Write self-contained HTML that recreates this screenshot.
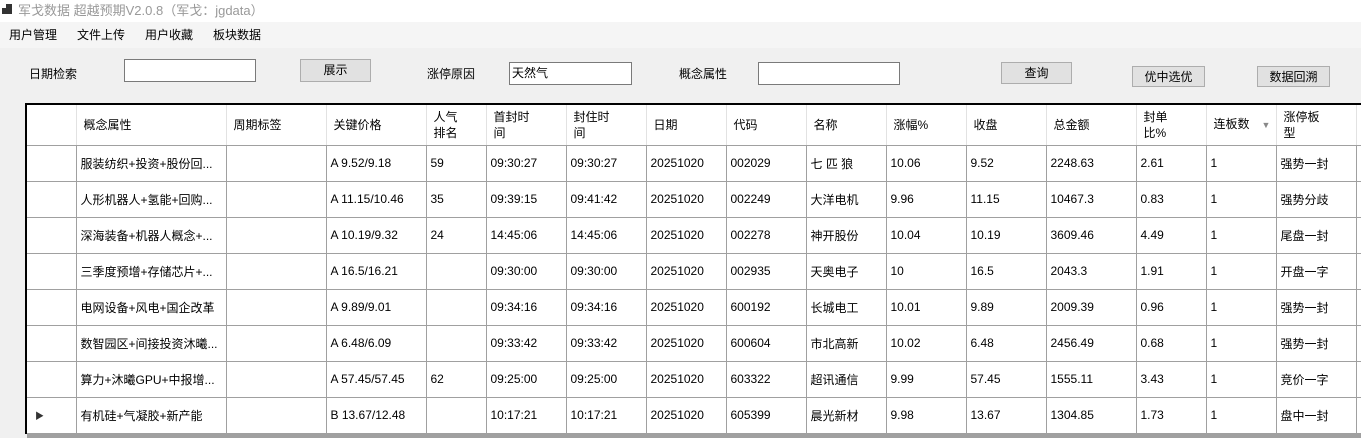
<!DOCTYPE html>
<html><head><meta charset="utf-8"><style>
*{margin:0;padding:0;box-sizing:border-box}
body{width:1361px;height:438px;overflow:hidden;background:#f0f0f0;font-family:"Liberation Sans","Noto Sans CJK SC",sans-serif;font-size:12px;color:#000;position:relative}
.abs{position:absolute}
.title{left:0;top:0;width:1361px;height:22px;background:#fff;color:#999;font-size:13px;line-height:22px;padding-left:18px}
.menu{left:0;top:22px;width:1361px;height:26px;background:#f5f5f5;font-size:12px;line-height:26px}
.menu span{position:absolute;top:0}
.lbl{font-size:12px;line-height:16px}
.tb{background:#fff;border:1px solid #7a7a7a;height:23px;font-size:12px;line-height:21px;padding-left:2px}
.btn{background:#e1e1e1;border:1px solid #adadad;text-align:center;font-size:12px;line-height:20px}
table{position:absolute;left:25px;top:103px;width:1336px;border-collapse:collapse;table-layout:fixed;background:#fff;border-top:2px solid #000;border-left:2px solid #000}
td{border:1px solid #a0a0a0;height:36px;padding:0 0 0 4px;white-space:nowrap;overflow:hidden;font-size:12px;vertical-align:middle}
tr.h td{height:41px;border-top:none;border-left:1px solid #e2e2e2;border-right:1px solid #e2e2e2;border-bottom:1px solid #a0a0a0;padding-left:7px;line-height:16px}
td.rh{border-left:none}
td.last{border-right:none}
</style></head><body>
<div class="abs title"><span class="abs" style="left:2px;top:8px;width:5px;height:6px;background:#333"></span><span class="abs" style="left:6px;top:4px;width:6px;height:10px;background:#333"></span>军戈数据 超越预期V2.0.8（军戈：jgdata）</div>
<div class="abs menu"><span style="left:9px">用户管理</span><span style="left:77px">文件上传</span><span style="left:145px">用户收藏</span><span style="left:213px">板块数据</span></div>
<div class="abs lbl" style="left:29px;top:66px">日期检索</div>
<div class="abs tb" style="left:124px;top:59px;width:132px"></div>
<div class="abs btn" style="left:300px;top:59px;width:71px;height:23px">展示</div>
<div class="abs lbl" style="left:427px;top:66px">涨停原因</div>
<div class="abs tb" style="left:509px;top:62px;width:123px">天然气</div>
<div class="abs lbl" style="left:679px;top:66px">概念属性</div>
<div class="abs tb" style="left:758px;top:62px;width:142px"></div>
<div class="abs btn" style="left:1001px;top:62px;width:71px;height:22px">查询</div>
<div class="abs btn" style="left:1132px;top:66px;width:73px;height:21px">优中选优</div>
<div class="abs btn" style="left:1257px;top:66px;width:73px;height:21px">数据回溯</div>
<table>
<colgroup><col style="width:50px"><col style="width:150px"><col style="width:100px"><col style="width:100px"><col style="width:60px"><col style="width:80px"><col style="width:80px"><col style="width:80px"><col style="width:80px"><col style="width:80px"><col style="width:80px"><col style="width:80px"><col style="width:90px"><col style="width:70px"><col style="width:70px"><col style="width:80px"><col style="width:6px"></colgroup>
<tr class="h"><td class="rh"></td><td>概念属性</td><td>周期标签</td><td>关键价格</td><td>人气<br>排名</td><td>首封时<br>间</td><td>封住时<br>间</td><td>日期</td><td>代码</td><td>名称</td><td>涨幅%</td><td>收盘</td><td>总金额</td><td>封单<br>比%</td><td>连板数<span style="position:relative;left:12px;color:#888;font-size:9px">▼</span></td><td>涨停板<br>型</td><td class="last"></td></tr>
<tr><td class="rh"></td><td>服装纺织+投资+股份回...</td><td></td><td>A 9.52/9.18</td><td>59</td><td>09:30:27</td><td>09:30:27</td><td>20251020</td><td>002029</td><td>七 匹 狼</td><td>10.06</td><td>9.52</td><td>2248.63</td><td>2.61</td><td>1</td><td>强势一封</td><td class="last"></td></tr>
<tr><td class="rh"></td><td>人形机器人+氢能+回购...</td><td></td><td>A 11.15/10.46</td><td>35</td><td>09:39:15</td><td>09:41:42</td><td>20251020</td><td>002249</td><td>大洋电机</td><td>9.96</td><td>11.15</td><td>10467.3</td><td>0.83</td><td>1</td><td>强势分歧</td><td class="last"></td></tr>
<tr><td class="rh"></td><td>深海装备+机器人概念+...</td><td></td><td>A 10.19/9.32</td><td>24</td><td>14:45:06</td><td>14:45:06</td><td>20251020</td><td>002278</td><td>神开股份</td><td>10.04</td><td>10.19</td><td>3609.46</td><td>4.49</td><td>1</td><td>尾盘一封</td><td class="last"></td></tr>
<tr><td class="rh"></td><td>三季度预增+存储芯片+...</td><td></td><td>A 16.5/16.21</td><td></td><td>09:30:00</td><td>09:30:00</td><td>20251020</td><td>002935</td><td>天奥电子</td><td>10</td><td>16.5</td><td>2043.3</td><td>1.91</td><td>1</td><td>开盘一字</td><td class="last"></td></tr>
<tr><td class="rh"></td><td>电网设备+风电+国企改革</td><td></td><td>A 9.89/9.01</td><td></td><td>09:34:16</td><td>09:34:16</td><td>20251020</td><td>600192</td><td>长城电工</td><td>10.01</td><td>9.89</td><td>2009.39</td><td>0.96</td><td>1</td><td>强势一封</td><td class="last"></td></tr>
<tr><td class="rh"></td><td>数智园区+间接投资沐曦...</td><td></td><td>A 6.48/6.09</td><td></td><td>09:33:42</td><td>09:33:42</td><td>20251020</td><td>600604</td><td>市北高新</td><td>10.02</td><td>6.48</td><td>2456.49</td><td>0.68</td><td>1</td><td>强势一封</td><td class="last"></td></tr>
<tr><td class="rh"></td><td>算力+沐曦GPU+中报增...</td><td></td><td>A 57.45/57.45</td><td>62</td><td>09:25:00</td><td>09:25:00</td><td>20251020</td><td>603322</td><td>超讯通信</td><td>9.99</td><td>57.45</td><td>1555.11</td><td>3.43</td><td>1</td><td>竞价一字</td><td class="last"></td></tr>
<tr><td class="rh" style="padding-left:8px;font-size:9px;color:#333">▶</td><td>有机硅+气凝胶+新产能</td><td></td><td>B 13.67/12.48</td><td></td><td>10:17:21</td><td>10:17:21</td><td>20251020</td><td>605399</td><td>晨光新材</td><td>9.98</td><td>13.67</td><td>1304.85</td><td>1.73</td><td>1</td><td>盘中一封</td><td class="last"></td></tr>
</table>
<div class="abs" style="left:27px;top:434px;width:1334px;height:4px;background:#a0a0a0"></div>
</body></html>
